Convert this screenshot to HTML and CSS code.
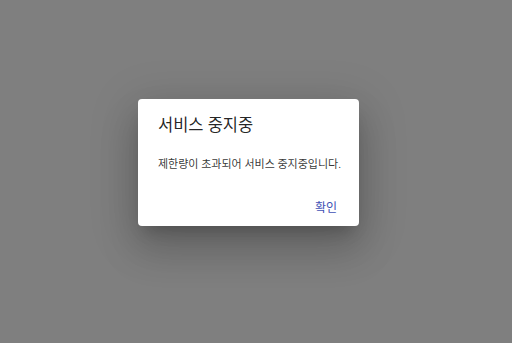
FILE: index.html
```html
<!DOCTYPE html>
<html lang="ko">
  <head>
    <meta charset="UTF-8" />
    <meta name="viewport" content="width=device-width, initial-scale=1.0" />
    <title>서비스 중지중</title>
    <link rel="stylesheet" href="styles.css">
  </head>
  <body>
    <div class="overlay">
      <div class="dialog">
        <h2 class="dialog-title">서비스 중지중</h2>
        <p class="dialog-content">제한량이 초과되어 서비스 중지중입니다.</p>
        <div class="dialog-actions">
          <button class="dialog-button">확인</button>
        </div>
      </div>
    </div>
  </body>
</html>
```

FILE: styles.css
```css
html, body {
  margin: 0;
  height: 100%;
}

body {
  background: #fff;
  font-family: Roboto, "Noto Sans CJK KR", sans-serif;
}

/* 배경 가림막 */
.overlay {
  height: 100%;
  background: rgba(0, 0, 0, 0.5);
  display: flex;
  align-items: center;
  justify-content: center;
}

/* 다이얼로그 */
.dialog {
  width: 221px;
  height: 127px;
  margin: 0 15px 18px 0;
  background: #fff;
  border-radius: 4px;
  box-shadow: 0 11px 15px -7px rgba(0, 0, 0, 0.2),
    0 24px 38px 3px rgba(0, 0, 0, 0.14),
    0 9px 46px 8px rgba(0, 0, 0, 0.12);
  box-sizing: border-box;
  padding: 15px 14px 4px 20px;
}

.dialog-title {
  margin: 0;
  font-size: 16.5px;
  font-weight: 400;
  line-height: 24px;
  color: rgba(0, 0, 0, 0.87);
}

.dialog-content {
  margin: 19px 0 0 0;
  font-size: 11px;
  line-height: 16px;
  white-space: nowrap;
  color: rgba(0, 0, 0, 0.8);
}

.dialog-actions {
  display: flex;
  justify-content: flex-end;
  margin-top: 21px;
}

.dialog-button {
  border: none;
  background: none;
  font-family: inherit;
  font-size: 12px;
  color: #3f51b5;
  padding: 4px 8px;
  line-height: 20px;
  cursor: pointer;
}
```
